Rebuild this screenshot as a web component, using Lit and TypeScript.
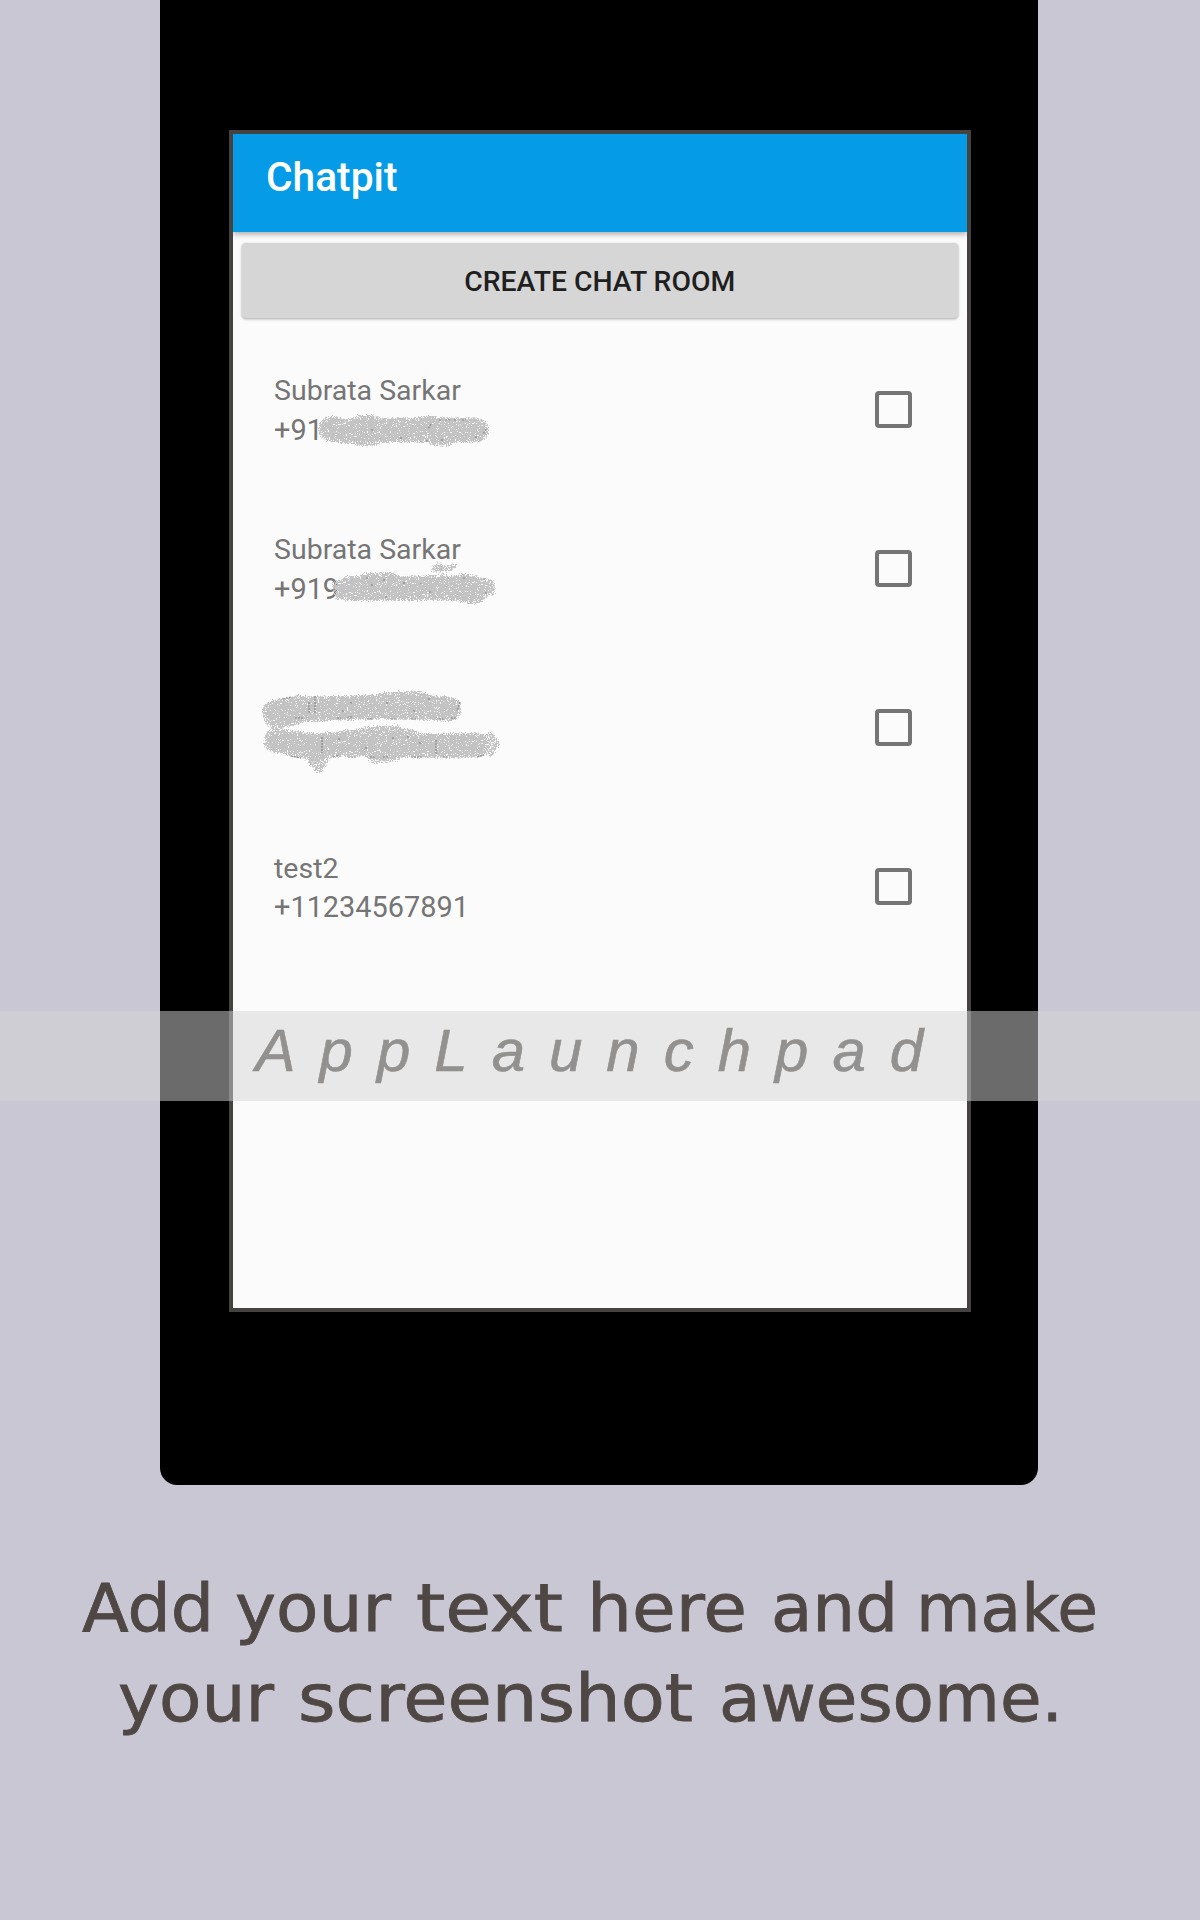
import { LitElement, html, svg, css, nothing } from "lit";
import { customElement, property } from "lit/decorators.js";

interface Stroke { d: string; w: number; }
interface Contact {
  name: string;
  phone: string;
  spray: Stroke[];
  mist: string;
  specks: string;
}

const CONTACTS: Contact[] = [
  {
    name: "Subrata Sarkar",
    phone: "+91",
    spray: [
      { d: "M98 99H100", w: 25 },
      { d: "M110 101C130 102 142 100 165 100S200 99 222 100L244 100", w: 24 },
    ],
    mist: "M124 88L140 88M126 113L140 113M190 89L203 90M201 113L216 113",
    specks: "M206 90h3M212 90h6M221 90h2M229 90h4M198 94l-3 5M253 99l-3 5M243 106v2M168 107v2M209 109v2M139 99v2M194 110v2",
  },
  {
    name: "Subrata Sarkar",
    phone: "+919",
    spray: [
      { d: "M116 99.500C150 100 190 98 220 99.500L244 100", w: 24 },
      { d: "M230 99L241 101", w: 28 },
    ],
    mist: "M200 80L206 76M208 81L222 77M102 94L105 108M258 92L260 104M130 87L160 86",
    specks: "M133 89h2M151 90v2M139 95v2M171 93v2M188 94v1M152 108h3M250 90h2M253 103v2M214 89h2M230 89h2M197 102v2",
  },
  {
    name: "",
    phone: "",
    spray: [
      { d: "M43 65C54 64 60 62 68 61", w: 27 },
      { d: "M60 61C95 61 120 59 150 59S200 59 216 61", w: 24 },
      { d: "M44 93C50 94 56 95 70 96", w: 24 },
      { d: "M60 97C90 98 120 95 150 96S210 99 244 97", w: 24 },
    ],
    mist: "M32 62L38 76L62 74M36 86L34 97M130 82L165 80M76 112L86 123L93 112M80 112L92 114M82 117H90M140 109L165 109M138 112L160 111M257 86L264 96L258 106M150 47L190 46M110 85L180 84",
    specks: "M82 48v18M76 54v12M50 51l8-2M62 70h8M104 70h4M114 69h5M134 71h5M158 71h5M178 71h6M206 71h5M218 70h6M227 54l-3 9M118 54v2M154 54v2M181 62v3M110 62v2M196 50v2M58 108l10 2M100 109l6-2M115 109h8M137 109h5M150 109h5M178 109h12M210 109h4M244 109l7-2M203 92v14M160 89v2M187 94v2M133 99v2M89 89v16M106 90v3M175 88v2",
  },
  { name: "test2", phone: "+11234567891", spray: [], mist: "", specks: "" },
];

@customElement("contact-row")
class ContactRow extends LitElement {
  @property({ attribute: false }) contact!: Contact;

  static styles = css`
    :host {
      position: relative;
      display: flex;
      align-items: center;
      justify-content: space-between;
      box-sizing: border-box;
      height: 159.200px;
      padding: 0 55.500px 0 41px;
    }
    .text {
      display: flex;
      flex-direction: column;
      margin-top: 3px;
      font: 400 28.900px/38.500px Roboto, sans-serif;
      color: #757575;
      white-space: nowrap;
    }
    .name { font-size: 28.500px; }
    .box {
      box-sizing: border-box;
      width: 37px;
      height: 37px;
      border: 4px solid #757575;
      border-radius: 4px;
    }
    .spray {
      position: absolute;
      left: 0;
      top: 0;
      width: 320px;
      height: 140px;
      fill: none;
      stroke: #c3c3c3;
      stroke-linecap: round;
      stroke-linejoin: round;
    }
    .mist { stroke-width: 7px; stroke-opacity: 0.75; }
    .specks { stroke: #858585; stroke-width: 1.200px; stroke-linecap: butt; stroke-dasharray: 2 1; }
  `;

  render() {
    const c = this.contact;
    return html`
      <div class="text"><span class="name">${c.name || "\u00a0"}</span><span>${c.phone || "\u00a0"}</span></div>
      <div class="box"></div>
      ${c.spray.length
        ? html`<svg class="spray" viewBox="0 0 320 140">
            <defs>
              <filter id="spray" filterUnits="userSpaceOnUse" x="0" y="0" width="320" height="140" color-interpolation-filters="sRGB">
                <feGaussianBlur in="SourceAlpha" stdDeviation="2.6" result="soft" />
                <feTurbulence type="fractalNoise" baseFrequency="0.9" numOctaves="2" seed="4" result="noise" />
                <feComposite in="soft" in2="noise" operator="arithmetic" k1="3" k2="-0.5" k3="0" k4="0" result="mix" />
                <feComponentTransfer in="mix" result="mask"><feFuncA type="linear" slope="9" intercept="-4" /></feComponentTransfer>
                <feFlood flood-color="#c3c3c3" />
                <feComposite in2="mask" operator="in" />
              </filter>
            </defs>
            <g filter="url(#spray)">
              ${c.spray.map((s) => svg`<path d=${s.d} stroke-width=${s.w}></path>`)}
              <path class="mist" d=${c.mist}></path>
            </g>
            <path class="specks" d=${c.specks}></path>
          </svg>`
        : nothing}
    `;
  }
}

/* Each caption word: text, left edge, drawn width. */
const LINES: { y: number; words: [string, number, number][] }[] = [
  { y: 70.5, words: [["Add", 82, 132], ["your", 235, 156], ["text", 416, 147], ["here", 587, 160], ["and", 771, 127], ["make", 916, 182]] },
  { y: 160.5, words: [["your", 118, 156], ["screenshot", 298, 395], ["awesome.", 719, 344]] },
];

@customElement("app-root")
class AppRoot extends LitElement {
  static styles = css`
    :host {
      position: relative;
      display: flex;
      flex-direction: column;
      align-items: center;
      width: 1200px;
      height: 1920px;
      overflow: hidden;
      background: #c9c7d4;
    }
    .phone {
      flex: none;
      box-sizing: border-box;
      width: 878px;
      height: 1484.500px;
      margin-right: 2px;
      padding: 130px 67px 0 69px;
      border-radius: 0 0 17px 17px;
      background: #000;
    }
    .screen {
      box-sizing: border-box;
      height: 1182px;
      border: 4px solid #444342;
      display: flex;
      flex-direction: column;
      background: #fbfbfb;
    }
    .bar {
      flex: none;
      box-sizing: border-box;
      height: 97.500px;
      padding: 17.500px 33px 0;
      background: #059be7;
      box-shadow: 0 2px 6px rgba(0, 0, 0, 0.35);
      clip-path: inset(0 0 -12px 0);
      font: 500 40.700px/50px Roboto, sans-serif;
      color: #fff;
    }
    .create {
      flex: none;
      display: flex;
      align-items: center;
      justify-content: center;
      box-sizing: border-box;
      height: 75px;
      margin: 11px 9px 12px 8.500px;
      padding-top: 4px;
      border-radius: 4px;
      background: #d6d6d6;
      box-shadow: 0 1px 3px rgba(0, 0, 0, 0.35);
      font: 500 28.350px/38px Roboto, sans-serif;
      color: #1f1f1f;
    }
    .list { display: flex; flex-direction: column; }
    .watermark {
      position: absolute;
      left: 0;
      top: 1011px;
      width: 1200px;
      height: 90px;
      background: rgba(213, 213, 213, 0.5);
    }
    .mark { font: italic 60px "Liberation Sans", sans-serif; fill: #929190; stroke: #929190; stroke-width: 0.600px; }
    .caption { flex: none; width: 1200px; height: 240px; margin-top: 75.500px; }
    .word { font: 66px "DejaVu Sans", sans-serif; fill: #4f4744; stroke: #4f4744; stroke-width: 0.800px; }
  `;

  render() {
    return html`
      <div class="phone">
        <div class="screen">
          <div class="bar">Chatpit</div>
          <div class="create">CREATE CHAT ROOM</div>
          <div class="list">${CONTACTS.map((c) => html`<contact-row .contact=${c}></contact-row>`)}</div>
        </div>
      </div>
      <svg class="caption" viewBox="0 0 1200 240">
        ${LINES.map((l) => l.words.map(([t, x, w]) => svg`<text class="word" x=${x} y=${l.y} textLength=${w} lengthAdjust="spacingAndGlyphs">${t}</text>`))}
      </svg>
      <svg class="watermark" viewBox="0 0 1200 90">
        <text class="mark" x="255.500" y="60" letter-spacing="24">AppLaunchpad</text>
      </svg>
    `;
  }
}
